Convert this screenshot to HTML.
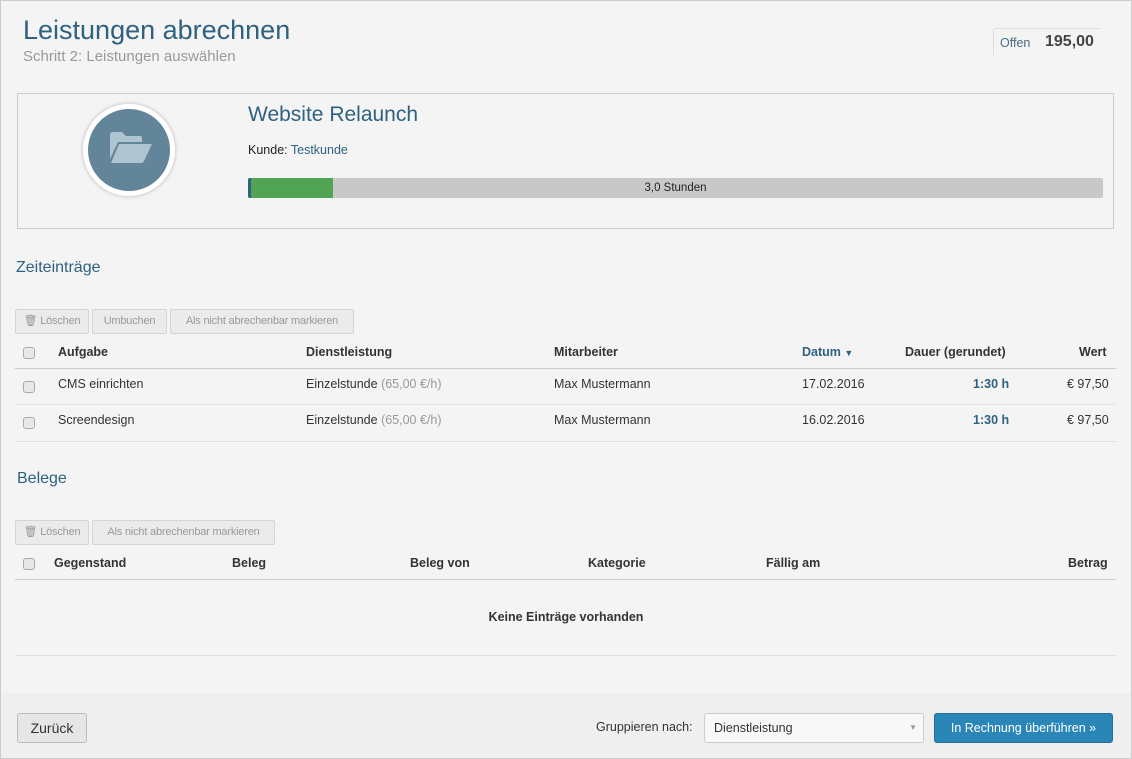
<!DOCTYPE html>
<html><head><meta charset="utf-8"><style>
*{box-sizing:border-box;margin:0;padding:0}
body{width:1132px;height:759px;background:#f4f4f4;font-family:"Liberation Sans",sans-serif;font-size:12.5px;color:#333;position:relative;overflow:hidden}
.a{position:absolute;white-space:nowrap}
.btn{position:absolute;height:25px;border:1px solid #d4d4d4;border-radius:2px;background:#ebebeb;color:#999;font-size:11px;line-height:23px;text-align:center;white-space:nowrap;overflow:hidden;letter-spacing:-0.2px}
.cb{position:absolute;width:12px;height:12px;border:1px solid #aaa;border-radius:3px;background:#e8e8e8}
.th{font-weight:bold;color:#333;font-size:12.5px}
.line{position:absolute;left:15px;width:1101px;height:1px}
</style></head><body>
<div class="a" style="left:0;top:0;width:1132px;height:759px;border:1px solid #ccc;z-index:5;pointer-events:none"></div>
<div class="a" style="left:23px;top:15px;font-size:27px;color:#2f6180">Leistungen abrechnen</div>
<div class="a" style="left:23px;top:48px;font-size:15px;color:#999">Schritt 2: Leistungen auswählen</div>
<div class="a" style="left:993px;top:28px;width:107px;height:27px;border-left:1px solid #ddd;border-top:1px solid #ddd;border-radius:3px 0 0 0"></div>
<div class="a" style="left:1000px;top:36px;font-size:12.5px;color:#4b6a80">Offen</div>
<div class="a" style="left:1045px;top:33px;font-size:16px;font-weight:bold;color:#444">195,00</div>

<div class="a" style="left:17px;top:93px;width:1097px;height:136px;border:1px solid #ccc"></div>
<div class="a" style="left:82px;top:103px;width:94px;height:94px;border-radius:50%;background:#fff;border:1px solid #ddd;box-shadow:0 0 3px #ccc"></div>
<div class="a" style="left:88px;top:109px;width:82px;height:82px;border-radius:50%;background:#628599"></div>
<svg class="a" style="left:108px;top:131px" width="46" height="34" viewBox="0 0 46 34"><path d="M2 4q0-3 3-3h9l4 4h14q2 0 2 2v4H10L2 28z" fill="#aec4d0"/><path d="M11 13h33l-8 17q-1 2-3 2H3z" fill="#aec4d0"/></svg>
<div class="a" style="left:248px;top:103px;font-size:21px;color:#2f6180">Website Relaunch</div>
<div class="a" style="left:248px;top:143px;font-size:12.5px;color:#222">Kunde: <span style="color:#2f6180">Testkunde</span></div>
<div class="a" style="left:248px;top:178px;width:855px;height:20px;background:#c8c8c8;border-radius:2px;overflow:hidden"><div style="position:absolute;left:0;top:0;width:3px;height:20px;background:#2f6180"></div><div style="position:absolute;left:3px;top:0;width:82px;height:20px;background:#52a455"></div><div style="position:absolute;width:100%;text-align:center;line-height:20px;font-size:11.5px;color:#222">3,0 Stunden</div></div>

<div class="a" style="left:16px;top:259px;font-size:16px;color:#2f6180">Zeiteinträge</div>
<div class="btn" style="left:15px;top:309px;width:74px">&#128465; Löschen</div>
<div class="btn" style="left:92px;top:309px;width:75px">Umbuchen</div>
<div class="btn" style="left:170px;top:309px;width:184px">Als nicht abrechenbar markieren</div>
<div class="cb" style="left:23px;top:347px"></div>
<div class="a th" style="left:58px;top:345px">Aufgabe</div>
<div class="a th" style="left:306px;top:345px">Dienstleistung</div>
<div class="a th" style="left:554px;top:345px">Mitarbeiter</div>
<div class="a th" style="left:802px;top:345px;color:#2f6180">Datum <span style="font-size:9px">▼</span></div>
<div class="a th" style="left:905px;top:345px">Dauer (gerundet)</div>
<div class="a th" style="left:1079px;top:345px">Wert</div>
<div class="line" style="top:368px;background:#ccc"></div>
<div class="cb" style="left:23px;top:381px"></div>
<div class="a" style="left:58px;top:377px">CMS einrichten</div>
<div class="a" style="left:306px;top:377px">Einzelstunde <span style="color:#999">(65,00 €/h)</span></div>
<div class="a" style="left:554px;top:377px">Max Mustermann</div>
<div class="a" style="left:802px;top:377px">17.02.2016</div>
<div class="a" style="left:973px;top:377px;font-weight:bold;color:#2f6180">1:30 h</div>
<div class="a" style="left:1067px;top:377px">€ 97,50</div>
<div class="line" style="top:404px;background:#e4e4e4"></div>
<div class="cb" style="left:23px;top:417px"></div>
<div class="a" style="left:58px;top:413px">Screendesign</div>
<div class="a" style="left:306px;top:413px">Einzelstunde <span style="color:#999">(65,00 €/h)</span></div>
<div class="a" style="left:554px;top:413px">Max Mustermann</div>
<div class="a" style="left:802px;top:413px">16.02.2016</div>
<div class="a" style="left:973px;top:413px;font-weight:bold;color:#2f6180">1:30 h</div>
<div class="a" style="left:1067px;top:413px">€ 97,50</div>
<div class="line" style="top:441px;background:#e0e0e0"></div>

<div class="a" style="left:17px;top:470px;font-size:16px;color:#2f6180">Belege</div>
<div class="btn" style="left:15px;top:520px;width:74px">&#128465; Löschen</div>
<div class="btn" style="left:92px;top:520px;width:183px">Als nicht abrechenbar markieren</div>
<div class="cb" style="left:23px;top:558px"></div>
<div class="a th" style="left:54px;top:556px">Gegenstand</div>
<div class="a th" style="left:232px;top:556px">Beleg</div>
<div class="a th" style="left:410px;top:556px">Beleg von</div>
<div class="a th" style="left:588px;top:556px">Kategorie</div>
<div class="a th" style="left:766px;top:556px">Fällig am</div>
<div class="a th" style="left:1068px;top:556px">Betrag</div>
<div class="line" style="top:579px;background:#ccc"></div>
<div class="a th" style="left:0;width:1132px;text-align:center;top:610px">Keine Einträge vorhanden</div>
<div class="line" style="top:655px;background:#e0e0e0"></div>

<div class="a" style="left:0;top:693px;width:1132px;height:66px;background:#efefef"></div>
<div class="a" style="left:17px;top:713px;width:70px;height:30px;border:1px solid #bbb;border-radius:3px;background:#e6e6e6;text-align:center;line-height:28px;font-size:14px;color:#333">Zurück</div>
<div class="a" style="left:596px;top:720px;font-size:12.5px">Gruppieren nach:</div>
<div class="a" style="left:704px;top:713px;width:220px;height:30px;border:1px solid #ccc;border-radius:3px;background:#f8f8f8;padding-left:9px;line-height:28px;font-size:12.5px">Dienstleistung<span style="position:absolute;right:6px;color:#999;font-size:8px">▼</span></div>
<div class="a" style="left:934px;top:713px;width:179px;height:30px;border:1px solid #22709a;border-radius:3px;background:#2b86b8;color:#fff;text-align:center;line-height:28px;font-size:12.5px">In Rechnung überführen »</div>
</body></html>
